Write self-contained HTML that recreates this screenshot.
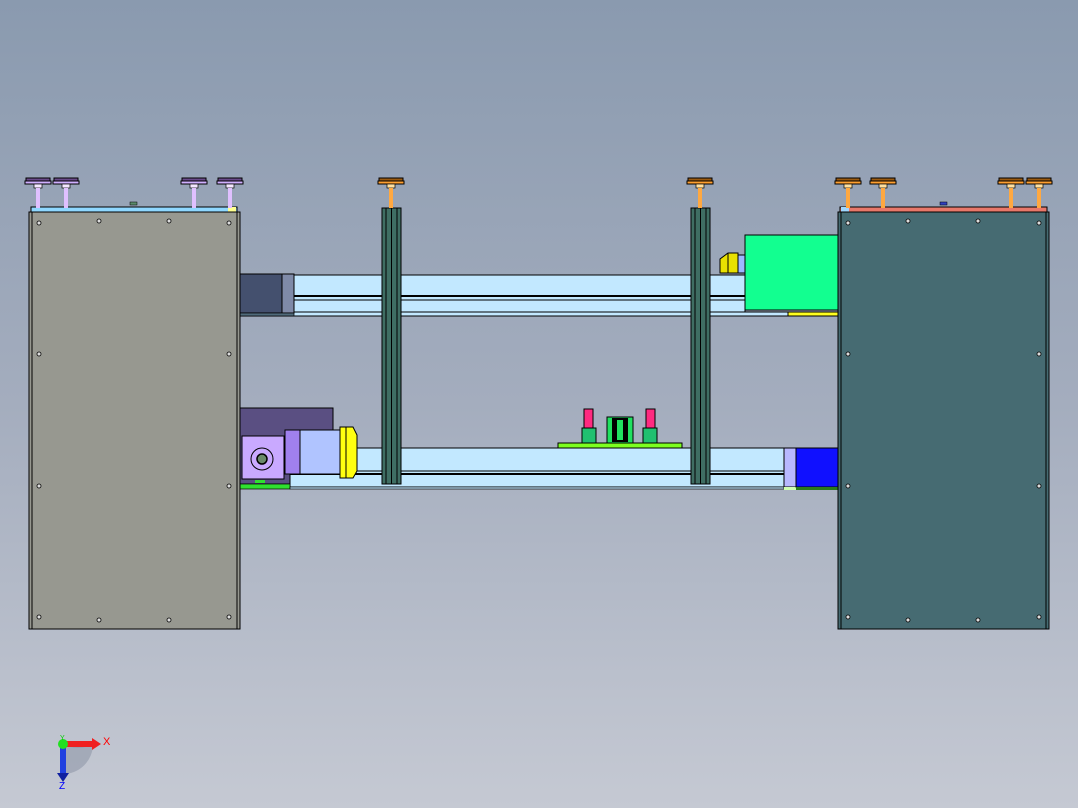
<!DOCTYPE html>
<html><head><style>
html,body{margin:0;padding:0;width:1078px;height:808px;overflow:hidden}
body{background:linear-gradient(#8a9aaf 0%,#a4adbe 50%,#c5c9d3 100%)}
svg{position:absolute;left:0;top:0}
</style></head><body>
<svg width="1078" height="808" viewBox="0 0 1078 808" font-family="Liberation Sans, sans-serif">
<defs>
<g id="kp">
<rect x="-12" y="178" width="24" height="3" fill="#6a4a8a" stroke="#000" stroke-width="1"/>
<rect x="-13" y="181" width="26" height="3" fill="#d0b0ff" stroke="#000" stroke-width="1"/>
<rect x="-4" y="184" width="8" height="4" fill="#f4e8ff" stroke="#000" stroke-width="0.7"/>
<rect x="-2" y="188" width="4" height="20" fill="#e0c0ff"/>
</g>
<g id="ko">
<rect x="-12" y="178" width="24" height="3" fill="#9a5a10" stroke="#000" stroke-width="1"/>
<rect x="-13" y="181" width="26" height="3" fill="#ffa030" stroke="#000" stroke-width="1"/>
<rect x="-4" y="184" width="8" height="4" fill="#ffe0a0" stroke="#000" stroke-width="0.7"/>
<rect x="-2" y="188" width="4" height="20" fill="#ffa840"/>
</g>
<g id="col">
<rect x="0" y="208" width="19" height="276" fill="#3f6e63" stroke="#000" stroke-width="1"/>
<line x1="4" y1="208" x2="4" y2="484" stroke="#000"/>
<line x1="9.5" y1="208" x2="9.5" y2="484" stroke="#000"/>
<line x1="15" y1="208" x2="15" y2="484" stroke="#000"/>
</g>
</defs>

<!-- upper beam -->
<rect x="240" y="275" width="505" height="38" fill="#c2e8ff" stroke="#000"/>
<line x1="294" y1="296" x2="745" y2="296" stroke="#000" stroke-width="2"/>
<line x1="294" y1="300" x2="745" y2="300" stroke="#000"/>
<rect x="240" y="312" width="548" height="4" fill="#c2e8ff" stroke="#000"/>
<rect x="788" y="312" width="50" height="4" fill="#ffff20" stroke="#000"/>
<rect x="240" y="274" width="42" height="39" fill="#44506e" stroke="#000"/>
<rect x="282" y="274" width="12" height="39" fill="#7f8aa8" stroke="#000"/>
<rect x="240" y="313" width="54" height="3" fill="#4f6a7a" stroke="#000" stroke-width="0.7"/>
<!-- yellow motor upper right -->
<rect x="738" y="255" width="8" height="18" fill="#9cb8ff" stroke="#000"/>
<path d="M728 253h10v20h-18v-14z" fill="#e8e000" stroke="#000"/>
<line x1="728" y1="253" x2="728" y2="273" stroke="#000"/>
<rect x="745" y="235" width="93" height="75" fill="#12ff90" stroke="#000"/>

<!-- lower beam -->
<rect x="240" y="408" width="93" height="76" fill="#5a4f82" stroke="#000"/>
<rect x="290" y="448" width="495" height="39" fill="#c2e8ff" stroke="#000"/>
<line x1="290" y1="471" x2="785" y2="471" stroke="#000" stroke-width="1"/>
<line x1="290" y1="474" x2="785" y2="474" stroke="#000" stroke-width="2"/>
<rect x="240" y="484" width="50" height="5" fill="#30e030" stroke="#000" stroke-width="0.7"/>
<rect x="290" y="487" width="494" height="2" fill="#c2e8ff" stroke="#000" stroke-width="0.7"/>
<rect x="784" y="448" width="12" height="39" fill="#b8b8ff" stroke="#000"/>
<rect x="784" y="487" width="12" height="3" fill="#d0ffb0"/>
<rect x="796" y="448" width="42" height="39" fill="#1010ff" stroke="#000"/>
<rect x="796" y="487" width="42" height="3" fill="#2a7a1a"/>
<!-- gearbox & motor -->
<rect x="285" y="430" width="20" height="44" fill="#a080ee" stroke="#000"/>
<rect x="242" y="436" width="42" height="43" fill="#c9a9ff" stroke="#000"/>
<circle cx="262" cy="459" r="11" fill="none" stroke="#000"/>
<circle cx="262" cy="459" r="5" fill="#6a8a6a" stroke="#000" stroke-width="1.5"/>
<rect x="255" y="480" width="10" height="3" fill="#30e030"/>
<rect x="300" y="430" width="40" height="44" fill="#b0c4ff" stroke="#000"/>
<path d="M340 427h13l4 8v36l-4 7h-13z" fill="#ffff10" stroke="#000"/>
<line x1="346" y1="427" x2="346" y2="478" stroke="#000"/>
<!-- plate with pins -->
<rect x="558" y="443" width="124" height="5" fill="#7cff20" stroke="#000"/>
<rect x="584" y="409" width="9" height="19" fill="#ff2a80" stroke="#000"/>
<rect x="582" y="428" width="14" height="15" fill="#20c070" stroke="#000"/>
<rect x="646" y="409" width="9" height="19" fill="#ff2a80" stroke="#000"/>
<rect x="643" y="428" width="14" height="15" fill="#20c070" stroke="#000"/>
<rect x="607" y="417" width="26" height="26" fill="#20e060" stroke="#000"/>
<rect x="612" y="418" width="16" height="24" fill="#000"/>
<rect x="617" y="420" width="6" height="20" fill="#20e060"/>

<!-- columns -->
<use href="#col" x="382"/>
<use href="#col" x="691"/>

<!-- left panel -->
<rect x="31" y="207" width="206" height="5" fill="#8fd8ff" stroke="#000"/>
<rect x="228" y="207" width="8" height="5" fill="#ffff90"/>
<rect x="29" y="212" width="211" height="417" fill="#979890" stroke="#000"/>
<line x1="237" y1="212" x2="237" y2="629" stroke="#000"/>
<line x1="32" y1="212" x2="32" y2="629" stroke="#000"/>
<rect x="130" y="202" width="7" height="3" fill="#5a8a6a" stroke="#000" stroke-width="0.5"/>
<!-- right panel -->
<rect x="840" y="207" width="207" height="5" fill="#e8786a" stroke="#000"/>
<rect x="841" y="207" width="8" height="5" fill="#a0d8ff"/>
<rect x="838" y="212" width="211" height="417" fill="#466b72" stroke="#000"/>
<line x1="841" y1="212" x2="841" y2="629" stroke="#000"/>
<line x1="1046" y1="212" x2="1046" y2="629" stroke="#000"/>
<rect x="940" y="202" width="7" height="3" fill="#3040c0" stroke="#000" stroke-width="0.5"/>

<!-- holes -->
<g fill="#ddd" stroke="#000" stroke-width="0.8">
<circle cx="39" cy="223" r="2"/><circle cx="99" cy="221" r="2"/><circle cx="169" cy="221" r="2"/><circle cx="229" cy="223" r="2"/>
<circle cx="39" cy="354" r="2"/><circle cx="229" cy="354" r="2"/>
<circle cx="39" cy="486" r="2"/><circle cx="229" cy="486" r="2"/>
<circle cx="39" cy="617" r="2"/><circle cx="99" cy="620" r="2"/><circle cx="169" cy="620" r="2"/><circle cx="229" cy="617" r="2"/>
<circle cx="848" cy="223" r="2"/><circle cx="908" cy="221" r="2"/><circle cx="978" cy="221" r="2"/><circle cx="1039" cy="223" r="2"/>
<circle cx="848" cy="354" r="2"/><circle cx="1039" cy="354" r="2"/>
<circle cx="848" cy="486" r="2"/><circle cx="1039" cy="486" r="2"/>
<circle cx="848" cy="617" r="2"/><circle cx="908" cy="620" r="2"/><circle cx="978" cy="620" r="2"/><circle cx="1039" cy="617" r="2"/>
</g>

<!-- knobs -->
<use href="#kp" x="38"/><use href="#kp" x="66"/><use href="#kp" x="194"/><use href="#kp" x="230"/>
<use href="#ko" x="391"/><use href="#ko" x="700"/>
<use href="#ko" x="848"/><use href="#ko" x="883"/><use href="#ko" x="1011"/><use href="#ko" x="1039"/>

<!-- axis triad -->
<path d="M63 744 A30 30 0 0 0 93 744 L63 744Z" fill="#8890a0" opacity="0.5"/>
<path d="M63 744 L93 744 A30 30 0 0 1 63 774Z" fill="#9098a8" opacity="0.6"/>
<rect x="63" y="741" width="30" height="6" fill="#f02020"/>
<path d="M92 738l9 6-9 6z" fill="#f02020"/>
<rect x="60" y="744" width="6" height="30" fill="#2040e0"/>
<path d="M57 773h12l-6 9z" fill="#1020a0"/>
<circle cx="63" cy="744" r="5" fill="#20e020"/>
<text x="103" y="745" font-size="11" fill="#f00">X</text>
<text x="59" y="789" font-size="10" fill="#00f">Z</text>
<text x="60" y="740" font-size="7" fill="#0c0">Y</text>
</svg>
</body></html>
